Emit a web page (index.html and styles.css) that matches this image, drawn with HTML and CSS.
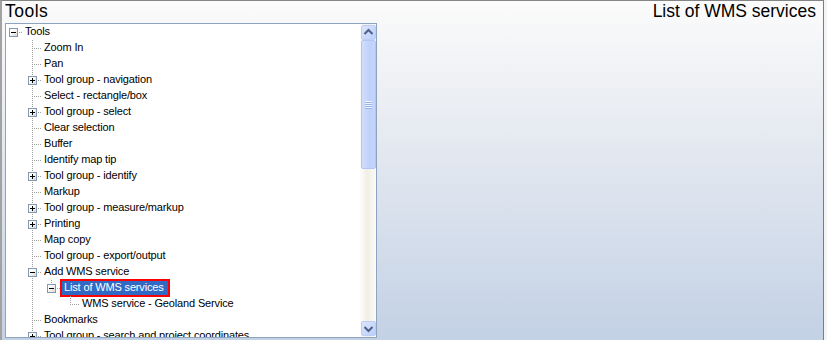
FILE: index.html
```html
<!DOCTYPE html>
<html>
<head>
<meta charset="utf-8">
<link rel="stylesheet" href="styles.css">
</head>
<body>
<div class="frame">
  <div class="left">
    <div class="hdr">Tools</div>
    <div class="panel">
      <div class="tree">
        <div class="row"><span class="c root"><i class="box minus"></i></span><span class="lbl">Tools</span></div>
        <div class="row"><span class="c"></span><span class="c tee"></span><span class="lbl">Zoom In</span></div>
        <div class="row"><span class="c"></span><span class="c tee"></span><span class="lbl">Pan</span></div>
        <div class="row"><span class="c"></span><span class="c tee"><i class="box plus"></i></span><span class="lbl">Tool group - navigation</span></div>
        <div class="row"><span class="c"></span><span class="c tee"></span><span class="lbl">Select - rectangle/box</span></div>
        <div class="row"><span class="c"></span><span class="c tee"><i class="box plus"></i></span><span class="lbl">Tool group - select</span></div>
        <div class="row"><span class="c"></span><span class="c tee"></span><span class="lbl">Clear selection</span></div>
        <div class="row"><span class="c"></span><span class="c tee"></span><span class="lbl">Buffer</span></div>
        <div class="row"><span class="c"></span><span class="c tee"></span><span class="lbl">Identify map tip</span></div>
        <div class="row"><span class="c"></span><span class="c tee"><i class="box plus"></i></span><span class="lbl">Tool group - identify</span></div>
        <div class="row"><span class="c"></span><span class="c tee"></span><span class="lbl">Markup</span></div>
        <div class="row"><span class="c"></span><span class="c tee"><i class="box plus"></i></span><span class="lbl">Tool group - measure/markup</span></div>
        <div class="row"><span class="c"></span><span class="c tee"><i class="box plus"></i></span><span class="lbl">Printing</span></div>
        <div class="row"><span class="c"></span><span class="c tee"></span><span class="lbl">Map copy</span></div>
        <div class="row"><span class="c"></span><span class="c tee"></span><span class="lbl">Tool group - export/output</span></div>
        <div class="row"><span class="c"></span><span class="c tee"><i class="box minus"></i></span><span class="lbl">Add WMS service</span></div>
        <div class="row"><span class="c"></span><span class="c pipe"></span><span class="c elbow"><i class="box minus"></i></span><span class="lbl sel">List of WMS services</span></div>
        <div class="row"><span class="c"></span><span class="c pipe"></span><span class="c"></span><span class="c elbow"></span><span class="lbl">WMS service - Geoland Service</span></div>
        <div class="row"><span class="c"></span><span class="c tee"></span><span class="lbl">Bookmarks</span></div>
        <div class="row"><span class="c"></span><span class="c tee"><i class="box plus"></i></span><span class="lbl">Tool group - search and project coordinates</span></div>
      </div>
      <div class="sb">
        <div class="sb-btn"><svg width="13" height="13" viewBox="0 0 13 13"><path d="M2.5 8 L6.5 4 L10.5 8" fill="none" stroke="#4d6185" stroke-width="2"/></svg></div>
        <div class="sb-thumb"><span class="grip"></span></div>
        <div class="sb-track"></div>
        <div class="sb-btn"><svg width="13" height="13" viewBox="0 0 13 13"><path d="M2.5 5 L6.5 9 L10.5 5" fill="none" stroke="#4d6185" stroke-width="2"/></svg></div>
      </div>
    </div>
  </div>
  <div class="right">
    <div class="title">List of WMS services</div>
  </div>
</div>
</body>
</html>
```
FILE: styles.css
```css
html, body {
  margin: 0;
  padding: 0;
  background: #f4f4f4;
}
body {
  width: 827px;
  height: 340px;
  overflow: hidden;
  font-family: "Liberation Sans", Arial, sans-serif;
}
.frame {
  box-sizing: border-box;
  width: 824px;
  height: 340px;
  border-top: 1px solid #858585;
  border-left: 2px solid #a2a2a2;
  border-right: 1px solid #7c7c7c;
  background: linear-gradient(to bottom, #fbfbfb 0%, #eef0f4 25%, #c3d1e5 100%);
  display: grid;
  grid-template-columns: 375px 1fr;
}
.left {
  padding-left: 3px;
  display: flex;
  flex-direction: column;
}
.hdr, .title {
  height: 22px;
  line-height: 21px;
  font-size: 17.5px;
  color: #000;
  white-space: nowrap;
}
.hdr {
  letter-spacing: 0.5px;
}
.title {
  text-align: right;
  padding-right: 7px;
}
.panel {
  box-sizing: border-box;
  width: 372px;
  height: 315px;
  border: 1px solid #8ea3bf;
  background: #fff;
  display: grid;
  grid-template-columns: 1fr 16px;
  overflow: hidden;
}
.tree {
  overflow: hidden;
  font-size: 11px;
  letter-spacing: -0.15px;
  color: #000;
}
.row {
  display: flex;
  align-items: center;
  height: 16px;
  margin-left: -2px;
}
.c {
  flex: none;
  width: 19px;
  height: 16px;
  position: relative;
}
.pipe::before, .tee::before, .elbow::before {
  content: "";
  position: absolute;
  left: 9px;
  top: 0;
  width: 1px;
  height: 16px;
  background: repeating-linear-gradient(to bottom, #a0a0a0 0 1px, transparent 1px 2px);
}
.elbow::before {
  height: 9px;
}
.tee::after, .elbow::after, .root::after {
  content: "";
  position: absolute;
  left: 9px;
  top: 8px;
  width: 10px;
  height: 1px;
  background: repeating-linear-gradient(to right, #a0a0a0 0 1px, transparent 1px 2px);
}
.box {
  position: absolute;
  z-index: 1;
  left: 5px;
  top: 4px;
  box-sizing: border-box;
  width: 9px;
  height: 9px;
  border: 1px solid #8598b2;
  background: linear-gradient(135deg, #ffffff 30%, #d9d9d0 100%);
}
.box::before {
  content: "";
  position: absolute;
  left: 1px;
  top: 3px;
  width: 5px;
  height: 1px;
  background: #000;
}
.plus::after {
  content: "";
  position: absolute;
  left: 3px;
  top: 1px;
  width: 1px;
  height: 5px;
  background: #000;
}
.lbl {
  flex: none;
  box-sizing: border-box;
  height: 14px;
  line-height: 12px;
  padding: 0 2px;
  white-space: nowrap;
}
.sel {
  margin-left: 1px;
  padding: 0 4px 0 2px;
  background: #316ac5;
  color: #fff;
  outline: 2px solid #ff0000;
}
.sb {
  display: flex;
  flex-direction: column;
  padding: 1px 0 1px 1px;
  background: linear-gradient(to right, #fdfdfb 0%, #f1efe4 45%, #fbfbf8 100%);
}
.sb-btn {
  flex: none;
  box-sizing: border-box;
  width: 15px;
  height: 15px;
  border: 1px solid #bccdf6;
  border-radius: 2px;
  background: linear-gradient(to bottom right, #dbe5fd, #bccffb);
  display: flex;
  align-items: center;
  justify-content: center;
}
.sb-thumb {
  flex: none;
  box-sizing: border-box;
  width: 15px;
  height: 129px;
  border: 1px solid #b2c6f5;
  border-radius: 2px;
  background: linear-gradient(to right, #d0ddfd, #bfd1fb 60%, #c5d5fb);
  display: flex;
  align-items: center;
  justify-content: center;
}
.grip {
  width: 7px;
  height: 8px;
  background: repeating-linear-gradient(to bottom, #eef3fe 0 1px, #9cb4ec 1px 2px);
}
.sb-track {
  flex: 1;
}
.right {
  min-width: 0;
}
```
